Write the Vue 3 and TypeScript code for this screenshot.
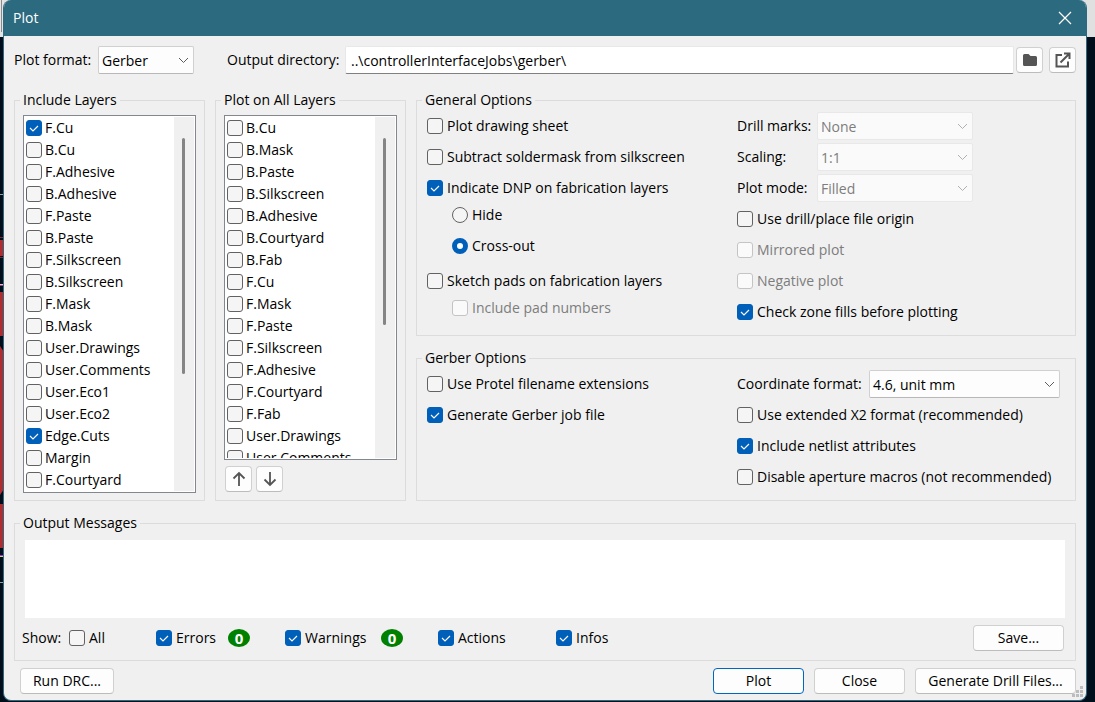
<script setup lang="ts">
import { ref, reactive } from 'vue'

interface Layer {
  name: string
  on: boolean
}

const makeLayers = (names: string[], enabled: string[] = []): Layer[] =>
  names.map((name) => ({ name, on: enabled.includes(name) }))

const includeLayers = reactive(
  makeLayers(
    ['F.Cu', 'B.Cu', 'F.Adhesive', 'B.Adhesive', 'F.Paste', 'B.Paste', 'F.Silkscreen', 'B.Silkscreen',
      'F.Mask', 'B.Mask', 'User.Drawings', 'User.Comments', 'User.Eco1', 'User.Eco2', 'Edge.Cuts',
      'Margin', 'F.Courtyard'],
    ['F.Cu', 'Edge.Cuts'],
  ),
)

const allLayers = reactive(
  makeLayers(['B.Cu', 'B.Mask', 'B.Paste', 'B.Silkscreen', 'B.Adhesive', 'B.Courtyard', 'B.Fab', 'F.Cu',
    'F.Mask', 'F.Paste', 'F.Silkscreen', 'F.Adhesive', 'F.Courtyard', 'F.Fab', 'User.Drawings',
    'User.Comments']),
)

const format = ref('Gerber')
const outputDir = ref('..\\controllerInterfaceJobs\\gerber\\')
const dnpMode = ref('cross')
const messages = ref('')

const opts = reactive({
  sheet: false,
  subtract: false,
  dnp: true,
  sketch: false,
  padNumbers: false,
  origin: false,
  mirrored: false,
  negative: false,
  zoneFills: true,
  protel: false,
  jobFile: true,
  x2: false,
  netlist: true,
  macros: false,
})

const plotSelects = [
  { id: 'drill', label: 'Drill marks:', value: 'None' },
  { id: 'scaling', label: 'Scaling:', value: '1:1' },
  { id: 'mode', label: 'Plot mode:', value: 'Filled' },
]

const filters = reactive([
  { name: 'All', on: false, count: null as number | null, counted: false },
  { name: 'Errors', on: true, count: 0, counted: true },
  { name: 'Warnings', on: true, count: 0, counted: true },
  { name: 'Actions', on: true, count: null, counted: false },
  { name: 'Infos', on: true, count: null, counted: false },
])
</script>

<template>
  <div class="desktop">
    <svg class="board" width="4" height="702" viewBox="0 0 4 702" aria-hidden="true">
      <rect width="4" height="37" fill="#e4e4e4" />
      <rect x="1" width="1" height="32" fill="#8a8a8a" />
      <path d="M0 194.500h4M0 582.500h4" stroke="#9a9f98" />
      <path d="M0 237.500h4M0 257.500h4" stroke="#8c2527" />
      <path d="M0 240h3l1 2v11l-1 3H0zM0 292h4v44H0zM0 346l4 6v137l-4 6zM0 504h4v44H0z" fill="#b02c2e" />
      <path d="M0 284.500h4M0 556.500h4" stroke="#d8d08a" />
      <path d="M0 285.500h4M0 555.500h4" stroke="#b02cb8" />
    </svg>

    <main class="dialog">
      <header class="titlebar">
        <h1>Plot</h1>
        <button class="close" type="button" aria-label="Close window">
          <svg width="14" height="14" viewBox="0 0 14 14"><path d="M1 1l12 12M13 1L1 13" stroke="#fff" stroke-width="1.200" fill="none" /></svg>
        </button>
      </header>

      <div class="body">
        <div class="toolbar">
          <label for="format">Plot format:</label>
          <span class="select format">
            <select id="format" v-model="format"><option>Gerber</option></select>
            <svg width="11" height="7" viewBox="0 0 11 7"><path d="M1 1l4.500 4.500L10 1" /></svg>
          </span>
          <label class="dir-label" for="dir">Output directory:</label>
          <input id="dir" v-model="outputDir" class="dir" type="text" spellcheck="false" />
          <button class="btn icon browse" type="button" aria-label="Browse folder">
            <svg width="16" height="14" viewBox="0 0 16 14"><path d="M2.500 1h4l2 2h5A1.500 1.500 0 0 1 15 4.500v7A1.500 1.500 0 0 1 13.500 13h-11A1.500 1.500 0 0 1 1 11.500v-9A1.500 1.500 0 0 1 2.500 1z" fill="#545454" /></svg>
          </button>
          <button class="btn icon open" type="button" aria-label="Open directory">
            <svg width="16" height="16" viewBox="0 0 16 16"><path d="M7 3H1.500v11.500H13V9.500M5.500 10.500L13.500 2.500M9 1.500h5.500V7" fill="none" stroke="#545454" stroke-width="2" /></svg>
          </button>
        </div>

        <div class="columns">
          <fieldset class="group">
            <legend>Include Layers</legend>
            <div class="layers">
              <div class="list">
                <div class="rows">
                  <label v-for="l in includeLayers" :key="l.name" class="check row">
                    <input v-model="l.on" type="checkbox" />{{ l.name }}
                  </label>
                </div>
                <div class="track"><div class="thumb long"></div></div>
              </div>
            </div>
          </fieldset>

          <fieldset class="group">
            <legend>Plot on All Layers</legend>
            <div class="layers">
              <div class="list">
                <div class="rows">
                  <label v-for="l in allLayers" :key="l.name" class="check row">
                    <input v-model="l.on" type="checkbox" />{{ l.name }}
                  </label>
                </div>
                <div class="track"><div class="thumb short"></div></div>
              </div>
              <div class="move">
                <button class="btn icon" type="button" aria-label="Move up">
                  <svg width="16" height="16" viewBox="0 0 16 16"><path d="M8 15V2.500M2.500 7.500L8 2l5.500 5.500" fill="none" stroke="#545454" stroke-width="1.800" /></svg>
                </button>
                <button class="btn icon" type="button" aria-label="Move down">
                  <svg width="16" height="16" viewBox="0 0 16 16"><path d="M8 1v12.500M2.500 8.500L8 14l5.500-5.500" fill="none" stroke="#545454" stroke-width="1.800" /></svg>
                </button>
              </div>
            </div>
          </fieldset>

          <div class="options">
            <fieldset class="group general">
              <legend>General Options</legend>
              <div class="split">
                <div class="left">
                  <label class="check"><input v-model="opts.sheet" type="checkbox" />Plot drawing sheet</label>
                  <label class="check"><input v-model="opts.subtract" type="checkbox" />Subtract soldermask from silkscreen</label>
                  <div class="nest">
                    <label class="check"><input v-model="opts.dnp" type="checkbox" />Indicate DNP on fabrication layers</label>
                    <div class="sub">
                      <label class="check"><input v-model="dnpMode" type="radio" name="dnp" value="hide" />Hide</label>
                      <label class="check"><input v-model="dnpMode" type="radio" name="dnp" value="cross" />Cross-out</label>
                    </div>
                  </div>
                  <div class="nest pads">
                    <label class="check"><input v-model="opts.sketch" type="checkbox" />Sketch pads on fabrication layers</label>
                    <div class="sub">
                      <label class="check off"><input v-model="opts.padNumbers" type="checkbox" disabled />Include pad numbers</label>
                    </div>
                  </div>
                </div>
                <div class="right">
                  <div v-for="s in plotSelects" :key="s.id" class="field">
                    <label class="caption" :for="s.id">{{ s.label }}</label>
                    <span class="select disabled">
                      <select :id="s.id" disabled><option>{{ s.value }}</option></select>
                      <svg width="11" height="7" viewBox="0 0 11 7"><path d="M1 1l4.500 4.500L10 1" /></svg>
                    </span>
                  </div>
                  <label class="check"><input v-model="opts.origin" type="checkbox" />Use drill/place file origin</label>
                  <label class="check off"><input v-model="opts.mirrored" type="checkbox" disabled />Mirrored plot</label>
                  <label class="check off"><input v-model="opts.negative" type="checkbox" disabled />Negative plot</label>
                  <label class="check"><input v-model="opts.zoneFills" type="checkbox" />Check zone fills before plotting</label>
                </div>
              </div>
            </fieldset>

            <fieldset class="group">
              <legend>Gerber Options</legend>
              <div class="split">
                <div class="left">
                  <label class="check"><input v-model="opts.protel" type="checkbox" />Use Protel filename extensions</label>
                  <label class="check"><input v-model="opts.jobFile" type="checkbox" />Generate Gerber job file</label>
                </div>
                <div class="right">
                  <div class="field">
                    <label class="caption wide" for="coord">Coordinate format:</label>
                    <span class="select">
                      <select id="coord"><option>4.6, unit mm</option></select>
                      <svg width="11" height="7" viewBox="0 0 11 7"><path d="M1 1l4.500 4.500L10 1" /></svg>
                    </span>
                  </div>
                  <label class="check"><input v-model="opts.x2" type="checkbox" />Use extended X2 format (recommended)</label>
                  <label class="check"><input v-model="opts.netlist" type="checkbox" />Include netlist attributes</label>
                  <label class="check"><input v-model="opts.macros" type="checkbox" />Disable aperture macros (not recommended)</label>
                </div>
              </div>
            </fieldset>
          </div>
        </div>

        <fieldset class="group output">
          <legend>Output Messages</legend>
          <div class="output-body">
            <textarea v-model="messages" class="messages" aria-label="Output messages" readonly></textarea>
            <div class="filters">
              <span>Show:</span>
              <template v-for="f in filters" :key="f.name">
                <label class="check"><input v-model="f.on" type="checkbox" />{{ f.name }}</label>
                <span v-if="f.counted" class="count">{{ f.count }}</span>
              </template>
              <button class="btn save" type="button">Save...</button>
            </div>
          </div>
        </fieldset>

        <footer class="footer">
          <button class="btn drc" type="button">Run DRC...</button>
          <button class="btn primary" type="button">Plot</button>
          <button class="btn" type="button">Close</button>
          <button class="btn drill" type="button">Generate Drill Files...</button>
        </footer>
      </div>

      <svg class="grip" width="12" height="12" viewBox="0 0 12 12" aria-hidden="true">
        <path d="M8 0h3v3H8zM4 4h3v3H4zM8 4h3v3H8zM0 8h3v3H0zM4 8h3v3H4zM8 8h3v3H8z" fill="#bdbdbd" />
      </svg>
    </main>
  </div>
</template>

<style>
body {
  margin: 0;
  background: #000e1c;
}
</style>

<style scoped>
* {
  box-sizing: border-box;
}

.desktop {
  position: relative;
  display: flex;
  min-height: 100vh;
  padding: 0 8px 1px 3px;
  background: linear-gradient(#e0e0e0 37px, #000e1c 37px);
  color: #000;
  font: 14px/20px "Open Sans", "Noto Sans", sans-serif;
}

.board {
  position: absolute;
  top: 0;
  left: 0;
}

.dialog {
  position: relative;
  display: flex;
  flex: 1;
  flex-direction: column;
  border: 1px solid #2c6a7f;
  border-top: 0;
  border-radius: 8px;
  background: #f0f0f0;
  overflow: hidden;
}

.titlebar {
  display: flex;
  align-items: center;
  justify-content: space-between;
  height: 36px;
  padding: 0 14px 0 9px;
  background: #2c6a7f;
  color: #fff;
}

h1 {
  margin: 0;
  font-size: 14px;
  font-weight: 400;
}

.close {
  display: flex;
  padding: 0;
  border: 0;
  background: none;
}

.body {
  display: flex;
  flex: 1;
  flex-direction: column;
  padding: 10px 10px 6px;
}

.toolbar {
  display: flex;
  align-items: center;
  margin-bottom: 16px;
}

button,
input,
select,
textarea {
  font: inherit;
  color: inherit;
}

.select {
  position: relative;
  display: flex;
  flex: 1;
}

.select select {
  width: 100%;
  height: 28px;
  padding: 1px 20px 0 3px;
  appearance: none;
  border: 1px solid #d0d0d0;
  border-bottom-color: #b8b8b8;
  border-radius: 2px;
  background: #fdfdfd;
}

.select svg {
  position: absolute;
  top: 11px;
  right: 5px;
  fill: none;
  stroke: #5c5c5c;
  pointer-events: none;
}

.select.disabled select {
  border-color: #e8e8e8;
  background: #fafafa;
  color: #7d7d7d;
  opacity: 1;
}

.select.disabled svg {
  stroke: #b0b0b0;
}

.select.format {
  flex: 0 0 96px;
}

.toolbar > label:first-child {
  width: 84px;
  white-space: nowrap;
}

.dir-label {
  width: 118px;
  margin-left: 33px;
  white-space: nowrap;
}

.dir {
  flex: 1;
  min-width: 0;
  height: 28px;
  padding: 0 5px;
  border: 1px solid #e8e8e8;
  border-bottom-color: #808080;
  border-radius: 2px;
  background: #fff;
}

.btn {
  min-width: 91px;
  height: 26px;
  padding: 0 4px;
  border: 1px solid #d0d0d0;
  border-bottom-color: #bcbcbc;
  border-radius: 4px;
  background: #fdfdfd;
  white-space: nowrap;
}

.btn.icon {
  display: flex;
  align-items: center;
  justify-content: center;
  width: 27px;
  min-width: 0;
  padding: 0;
}

.btn.icon.browse {
  margin-left: 2px;
}

.btn.icon.open {
  margin-left: 6px;
}

.columns {
  display: grid;
  flex: 1;
  grid-template-columns: 191px 191px 1fr;
  gap: 10px;
}

.group {
  min-width: 0;
  margin: 0;
  padding: 0;
  border: 1px solid #dcdcdc;
}

legend {
  margin-left: 5px;
  padding: 0 3px;
}

.layers {
  display: flex;
  flex-direction: column;
  height: 100%;
  padding: 5px 8px 7px;
}

.list {
  display: flex;
  flex: 1;
  padding: 1px;
  border: 1px solid #828790;
  background: #fff;
}

.rows {
  flex: 1;
  height: 0;
  min-height: 100%;
  overflow: hidden;
}

.track {
  width: 20px;
  padding: 21px 0 0 8px;
  background: #f0f0f0;
}

.thumb {
  width: 3px;
  border-radius: 2px;
  background: #858585;
}

.thumb.long {
  height: 236px;
}

.thumb.short {
  height: 187px;
}

.check {
  display: flex;
  align-items: center;
  gap: 4px;
  height: 23px;
  white-space: nowrap;
}

.row {
  gap: 3px;
  height: 22px;
  padding-left: 1px;
}

.check input {
  flex: none;
  width: 16px;
  height: 16px;
  margin: 0;
  appearance: none;
  border: 1px solid #626262;
  border-radius: 3px;
  background: #f5f5f5 center / 14px 14px no-repeat;
}

.check input[type="radio"] {
  border-radius: 50%;
}

.check input[type="checkbox"]:checked {
  border-color: #005fb8;
  background-color: #005fb8;
  background-image: url("data:image/svg+xml,%3Csvg xmlns='http://www.w3.org/2000/svg' viewBox='0 0 14 14'%3E%3Cpath d='M3 7l3 3 5-5' fill='none' stroke='white' stroke-width='1.100'/%3E%3C/svg%3E");
}

.check input[type="radio"]:checked {
  border: 5px solid #005fb8;
  background: #fff;
}

.off {
  color: #7d7d7d;
}

.check.off input {
  border-color: #c4c4c4;
  background-color: #fafafa;
}

.move {
  display: flex;
  gap: 4px;
  padding: 6px 1px 1px;
}

.options {
  display: flex;
  flex-direction: column;
  gap: 12px;
}

.general {
  flex: 1;
}

.split {
  display: grid;
  grid-template-columns: 310px 1fr;
  padding: 2px 15px 9px 10px;
}

.left {
  display: flex;
  flex-direction: column;
  gap: 8px;
  padding-top: 2px;
}

.nest,
.sub {
  display: flex;
  flex-direction: column;
  gap: 4px;
}

.sub {
  gap: 8px;
  padding-left: 25px;
}

.pads {
  margin-top: 4px;
}

.right {
  display: flex;
  flex-direction: column;
  gap: 3px;
}

.right .check {
  height: 28px;
}

.field {
  display: flex;
  align-items: center;
  white-space: nowrap;
}

.caption {
  width: 80px;
}

.caption.wide {
  width: 132px;
}

.field .disabled {
  flex: 0 0 156px;
}

.output {
  margin-top: 12px;
}

.output-body {
  padding: 7px 10px 9px;
}

.messages {
  display: block;
  width: 100%;
  height: 78px;
  padding: 4px;
  border: 0;
  background: #fff;
  resize: none;
}

.filters {
  display: grid;
  grid-template-columns: 47px 87px 72px 57px 96px 57px 118px 1fr auto;
  align-items: center;
  margin: 7px 1px 0 -3px;
}

.count {
  width: 22px;
  height: 18px;
  border-radius: 50%;
  background: #008000;
  color: #fff;
  font-size: 15px;
  font-weight: 700;
  line-height: 18px;
  text-align: center;
}

.save {
  grid-column: 9;
}

.footer {
  display: flex;
  gap: 10px;
  margin-top: 7px;
  padding-left: 6px;
}

.drc {
  width: 94px;
  margin-right: auto;
}

.primary {
  border-color: #0067c0;
}

.drill {
  width: 161px;
}

.grip {
  position: absolute;
  right: 2px;
  bottom: 2px;
}
</style>
